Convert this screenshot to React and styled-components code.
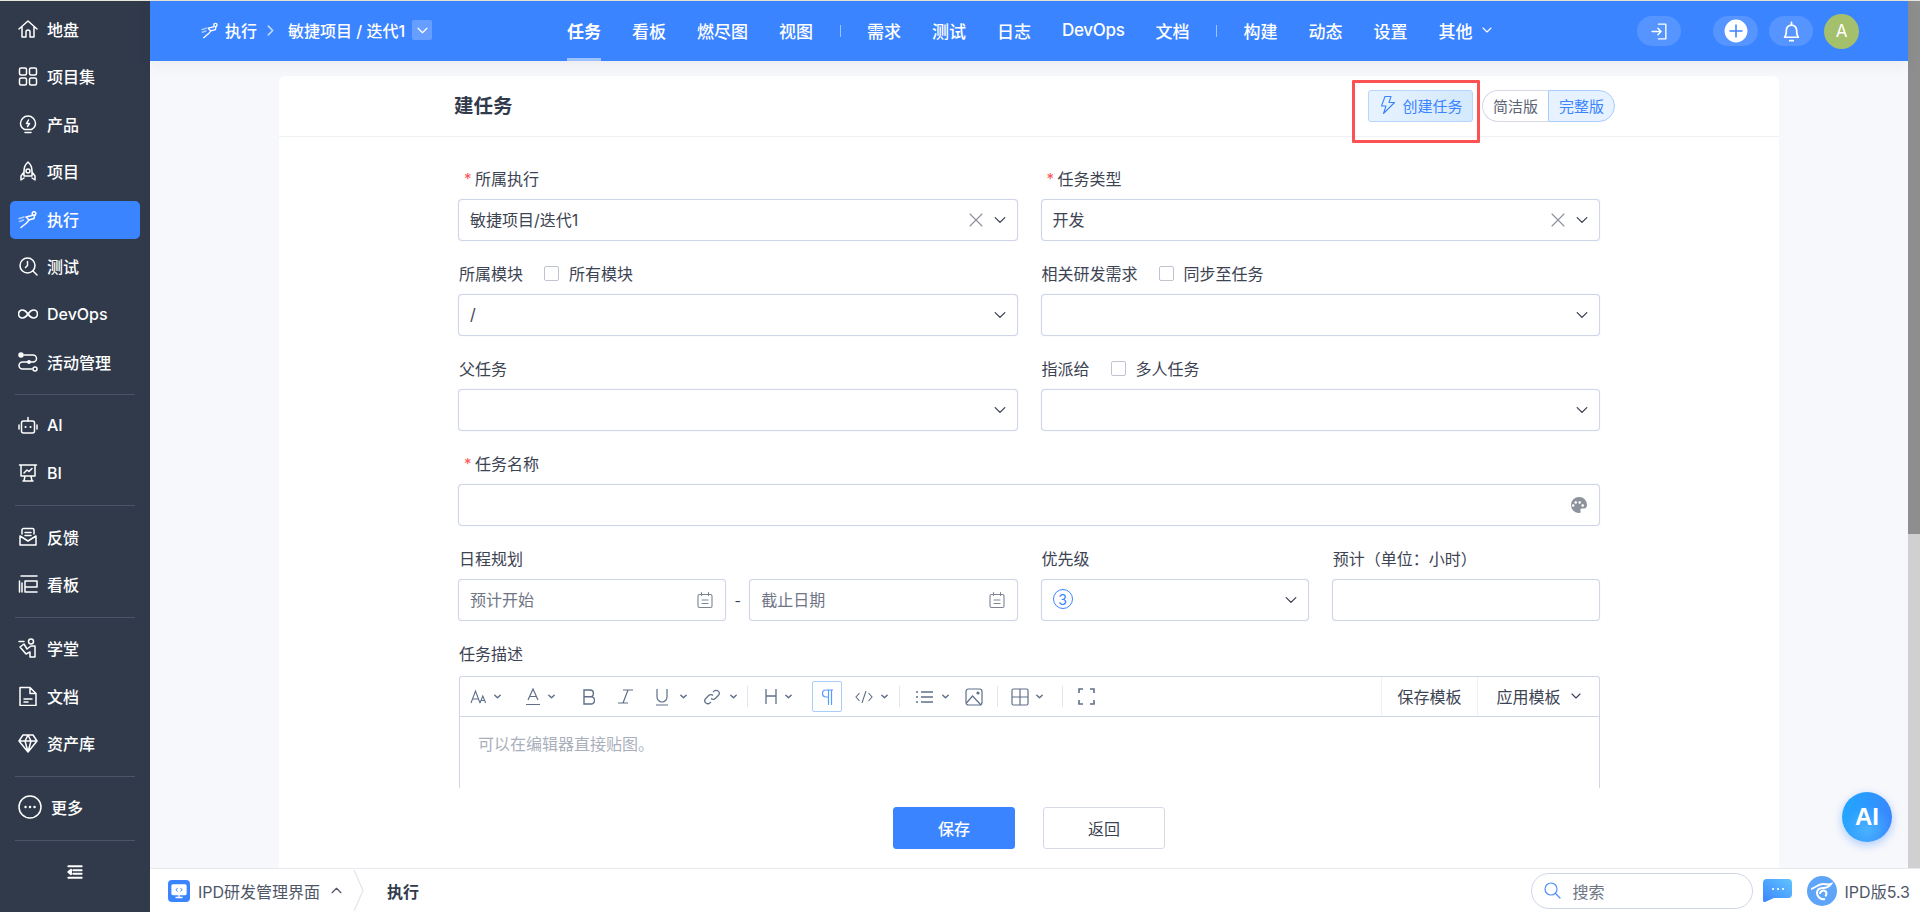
import React from 'react';
import styled, { createGlobalStyle } from 'styled-components';

const SANS = `Inter, 'Noto Sans CJK SC', 'Noto Sans', sans-serif`;

const Global = createGlobalStyle`
  html, body {
    margin: 0;
    padding: 0;
    height: 100%;
    overflow: hidden;
    font-family: ${SANS};
    color: #3c4353;
  }
  * { box-sizing: border-box; }
  #root { height: 100%; }
`;

const Shell = styled.div`
  width: 1920px;
  height: 912px;
  display: flex;
  flex-direction: column;
  position: relative;
  overflow: hidden;
  background: #f7f8fb;
`;
const TopStrip = styled.div`
  height: 1px;
  flex: none;
  background: #e9e6da;
`;
const Frame = styled.div`
  flex: 1;
  min-height: 0;
  display: flex;
`;
const Workspace = styled.div`
  flex: 1;
  min-width: 0;
  display: flex;
  flex-direction: column;
`;
const Body = styled.div`
  flex: 1;
  min-height: 0;
  display: flex;
`;

/* sidebar */
const Sidebar = styled.aside`
  width: 150px;
  flex: none;
  background: #303a4b;
  padding: 9.5px 10px 0;
  display: flex;
  flex-direction: column;
  color: #fff;
`;
const NavGroup = styled.div`
  flex: none;
  display: flex;
  flex-direction: column;
  gap: 9.6px;
`;
const NavItem = styled.div`
  height: 38px;
  flex: none;
  display: flex;
  align-items: center;
  gap: 9px;
  padding: 0 0 2px 8px;
  border-radius: 5px;
  font-size: 16px;
  font-weight: 500;
  background: ${p => (p.$active ? '#3b84ff' : 'transparent')};
  svg { flex: none; }
`;
const NavRule = styled.div`
  height: 1px;
  flex: none;
  margin: 12.3px 5px 12.5px;
  background: #4b5567;
`;
const Collapse = styled.div`
  display: flex;
  justify-content: center;
  padding-top: 11px;
`;

/* main area */
const Main = styled.div`
  flex: 1;
  min-width: 0;
  display: flex;
  flex-direction: column;
`;
const Header = styled.header`
  height: 60px;
  flex: none;
  background: #3b84ff;
  color: #fff;
  display: flex;
  align-items: center;
  box-shadow: 0 4px 14px rgba(40, 60, 100, 0.07);
  position: relative;
  z-index: 2;
`;
const Crumb = styled.div`
  width: 417px;
  flex: none;
  display: flex;
  align-items: center;
  padding: 0 0 2px 51px;
  font-size: 16px;
  font-weight: 500;
`;
const CrumbText = styled.span`
  margin-left: 6px;
`;
const CrumbSep = styled.span`
  display: inline-flex;
  margin: 0 12px 0 8px;
`;
const CrumbBox = styled.span`
  width: 20px;
  height: 20px;
  margin-left: 7px;
  border-radius: 2px;
  background: rgba(255, 255, 255, 0.22);
  display: flex;
  align-items: center;
  justify-content: center;
`;
const Tabs = styled.nav`
  flex: 1;
  height: 100%;
  display: flex;
  align-items: center;
  gap: 31px;
`;
const Tab = styled.div`
  height: 100%;
  display: flex;
  align-items: center;
  padding-bottom: 2px;
  font-size: 17px;
  font-weight: ${p => (p.$active ? 700 : 500)};
  position: relative;
  gap: 9px;
  letter-spacing: ${p => (p.$latin ? '-0.3px' : 0)};
  ${p => p.$active && `
    &::after {
      content: '';
      position: absolute;
      left: 0;
      right: 0;
      bottom: 0;
      height: 3px;
      background: #9cc2ff;
    }
  `}
`;
const TabRule = styled.span`
  width: 1px;
  height: 12px;
  margin: 0 -4.5px;
  background: rgba(255, 255, 255, 0.5);
`;
const HeadRight = styled.div`
  display: flex;
  align-items: center;
  margin-right: 49px;
`;
const RoundBtn = styled.div`
  width: ${p => p.$w}px;
  height: 30px;
  border-radius: 15px;
  margin-left: ${p => p.$ml || 0}px;
  background: rgba(255, 255, 255, 0.14);
  display: flex;
  align-items: center;
  justify-content: center;
`;
const Avatar = styled.div`
  width: 35px;
  height: 35px;
  margin-left: 11px;
  border-radius: 50%;
  background: #a5c06c;
  display: flex;
  align-items: center;
  justify-content: center;
  font-size: 17px;
`;
const Content = styled.div`
  flex: 1;
  min-height: 0;
  padding: 15px 129px 0;
  display: flex;
`;
const Card = styled.section`
  flex: 1;
  min-width: 0;
  display: flex;
  flex-direction: column;
  background: #fff;
  border-radius: 6px 6px 0 0;
`;
const CardHead = styled.div`
  height: 61px;
  flex: none;
  border-bottom: 1px solid #eff1f5;
  padding: 0 164px 0 176px;
  display: flex;
  align-items: center;
  justify-content: space-between;
  position: relative;
`;
const Title = styled.h1`
  margin: -3px 0 0 -1px;
  font-size: 19.5px;
  font-weight: 700;
  color: #303a4b;
`;
const HeadActions = styled.div`
  display: flex;
  align-items: center;
  gap: 9px;
`;
const QuickBtn = styled.div`
  width: 105px;
  height: 32px;
  padding-bottom: 2px;
  border: 1px solid #b8d5fa;
  border-radius: 3px;
  background: linear-gradient(90deg, #e8f3ff, #d3e9fd);
  color: #3b84ff;
  font-size: 15px;
  display: flex;
  align-items: center;
  justify-content: center;
  gap: 4px;
`;
const Switch = styled.div`
  width: 133px;
  height: 32px;
  display: flex;
  font-size: 15px;
`;
const SwitchPart = styled.div`
  flex: 1;
  padding-bottom: 2px;
  display: flex;
  align-items: center;
  justify-content: center;
  border: 1px solid ${p => (p.$on ? '#a9ccfb' : '#d6d9e6')};
  border-right-width: ${p => (p.$on ? 1 : 0)}px;
  border-radius: ${p => (p.$on ? '0 16px 16px 0' : '16px 0 0 16px')};
  background: ${p => (p.$on ? '#e6f2ff' : '#fff')};
  color: ${p => (p.$on ? '#3b84ff' : '#5c6474')};
`;
const RedMark = styled.div`
  position: absolute;
  left: 1073px;
  top: 4px;
  width: 128px;
  height: 63px;
  border: 3px solid #fb5354;
  border-radius: 1px;
`;

const FormScroll = styled.div`
  flex: 1;
  min-height: 0;
  overflow: hidden;
  padding: 32px 0 0 179px;
`;
const Form = styled.div`
  width: 1142px;
  display: grid;
  grid-template-columns: repeat(4, 1fr);
  column-gap: 23px;
  row-gap: 23px;
`;
const Field = styled.div`
  grid-column: span ${p => p.$span || 1};
  min-width: 0;
`;
const Label = styled.div`
  height: 20px;
  margin-bottom: ${p => p.$gap || 10}px;
  padding: 0 0 2px ${p => (p.$req ? 6 : 1)}px;
  display: flex;
  align-items: center;
  font-size: 16px;
  color: #3c4353;
  white-space: nowrap;
`;
const Star = styled.span`
  color: #fb5354;
  width: 11px;
  font-size: 15px;
`;
const Check = styled.span`
  width: 15px;
  height: 15px;
  margin: 0 10px 0 21px;
  border: 1px solid #bfc4d0;
  border-radius: 2px;
  background: #fff;
`;
const Control = styled.div`
  height: 42px;
  border: 1px solid #d0d6e8;
  border-radius: 4px;
  background: #fff;
  padding: 0 11px;
  display: flex;
  align-items: center;
  font-size: 16px;
  color: #3c4353;
  box-shadow: 0 0 1px rgba(190, 198, 225, 0.7);
`;
const Value = styled.span`
  flex: 1;
  min-width: 0;
  padding-bottom: 2px;
  white-space: nowrap;
  color: ${p => (p.$muted ? '#6e7585' : 'inherit')};
`;
const ClearIcon = styled.span`
  display: flex;
  margin-right: 11px;
`;
const DateRange = styled.div`
  position: relative;
`;
const Dash = styled.span`
  position: absolute;
  left: 100%;
  top: 0;
  width: 23px;
  height: 42px;
  display: flex;
  align-items: center;
  justify-content: center;
  font-size: 14px;
`;
const PriorityBadge = styled.span`
  width: 20px;
  height: 20px;
  border: 1px solid #3b84ff;
  border-radius: 50%;
  color: #3b84ff;
  font-size: 14px;
  display: flex;
  align-items: center;
  justify-content: center;
`;

const Editor = styled.div`
  margin-left: 1px;
  border: 1px solid #d0d6e8;
  border-bottom: none;
  border-radius: 3px 3px 0 0;
  height: 200px;
`;
const Toolbar = styled.div`
  height: 40px;
  border-bottom: 1px solid #d0d6e8;
  display: flex;
  align-items: center;
  padding-left: 10px;
`;
const Tool = styled.span`
  flex: none;
  width: ${p => p.$w}px;
  height: ${p => (p.$box ? 31 : 20)}px;
  margin-left: ${p => p.$ml || 0}px;
  display: flex;
  align-items: center;
  justify-content: ${p => (p.$box ? 'center' : 'space-between')};
  border: ${p => (p.$box ? '1px solid #a9ccfb' : 'none')};
  border-radius: 2px;
`;
const ToolRule = styled.span`
  flex: none;
  width: 1px;
  height: 21px;
  margin: 0 ${p => p.$r}px 0 ${p => p.$l}px;
  background: #e3e6ee;
`;
const ToolSpring = styled.span`
  flex: 1;
`;
const ToolAction = styled.div`
  flex: none;
  width: ${p => p.$w}px;
  height: 100%;
  padding-bottom: 2px;
  border-left: 1px solid #eff1f5;
  display: flex;
  align-items: center;
  justify-content: center;
  gap: 10px;
  font-size: 16px;
  color: #3c4353;
`;
const Placeholder = styled.div`
  padding: 18px 18px;
  font-size: 16px;
  line-height: 18px;
  color: #aab0bb;
`;
const FormFoot = styled.div`
  height: 80px;
  flex: none;
  background: #fff;
  padding-left: 614px;
  display: flex;
  align-items: center;
  gap: 28px;
`;
const Btn = styled.div`
  width: 122px;
  height: 42px;
  border-radius: 3px;
  display: flex;
  align-items: center;
  justify-content: center;
  font-size: 16px;
  font-weight: ${p => (p.$primary ? 500 : 400)};
  background: ${p => (p.$primary ? '#3b84ff' : '#fff')};
  color: ${p => (p.$primary ? '#fff' : '#3c4353')};
  border: 1px solid ${p => (p.$primary ? '#3b84ff' : '#d6d9e6')};
`;

const ScrollTrack = styled.div`
  width: 12px;
  flex: none;
  background: #d0d0d0;
`;
const ScrollThumb = styled.div`
  height: 533px;
  background: #8e8e8e;
`;

/* bottom bar */
const BottomBar = styled.footer`
  height: 44px;
  flex: none;
  background: #fff;
  border-top: 1px solid #e8eaf0;
  display: flex;
  align-items: center;
  padding: 0 10px 0 18px;
`;
const AppBadge = styled.span`
  width: 22px;
  height: 22px;
  border-radius: 4px;
  background: #3b84ff;
  display: flex;
  align-items: center;
  justify-content: center;
`;
const AppName = styled.span`
  margin: 0 11px 0 8px;
  font-size: 16px;
  color: #4e5668;
`;
const CrumbArrow = styled.svg`
  margin-left: 11px;
`;
const CrumbLabel = styled.span`
  margin-left: 22px;
  font-size: 16px;
  font-weight: 700;
  color: #303a4b;
`;
const BarSpring = styled.span`
  flex: 1;
`;
const SearchBox = styled.div`
  width: 222px;
  height: 36px;
  margin-right: 2px;
  border: 1px solid #d0d6e8;
  border-radius: 18px;
  display: flex;
  align-items: center;
  gap: 12px;
  padding-left: 12px;
  font-size: 16px;
  color: #6e7585;
`;
const ChatIcon = styled.svg`
  margin-left: 8px;
`;
const BrandIcon = styled.svg`
  margin-left: 15px;
`;
const Version = styled.span`
  margin-left: 8px;
  font-size: 16px;
  color: #4e5668;
`;
const AiFab = styled.div`
  position: absolute;
  left: 1842px;
  top: 792px;
  width: 50px;
  height: 50px;
  border-radius: 50%;
  background: radial-gradient(circle at 50% 75%, #4ab2ff, transparent 55%), linear-gradient(100deg, #1fa8ff, #3b84ff);
  box-shadow: 0 3px 10px rgba(59, 132, 255, 0.4);
  color: #fff;
  font-family: 'Liberation Sans', sans-serif;
  font-weight: 700;
  font-size: 24px;
  display: flex;
  align-items: center;
  justify-content: center;
`;

/* icons */
const Ico = ({ size = 20, color = '#fff', sw = 1.5, children, vb = 20 }) => (
  <svg width={size} height={size} viewBox={`0 0 ${vb} ${vb}`} fill="none" stroke={color} strokeWidth={sw} strokeLinecap="round" strokeLinejoin="round">
    {children}
  </svg>
);
const Chevron = ({ size = 10, color = '#3c4353', dir = 'down', sw = 1.1 }) => {
  const d = { down: 'M1 3l4 4 4-4', up: 'M1 7l4-4 4 4', right: 'M3 1l4 4-4 4' }[dir];
  return <Ico size={size} vb={10} color={color} sw={sw}><path d={d} /></Ico>;
};
const Runner = ({ size = 20 }) => (
  <Ico size={size}>
    <circle cx="16" cy="4.5" r="1.8" />
    <path d="M14 6.5L8 8l3 3-2.5 3L3 18.5M11 11l5-1.5 .5-3" />
    <path d="M1 9.5l5-1.5M1.5 12.5l4-1.5" stroke="rgba(255,255,255,.6)" />
  </Ico>
);
const icons = {
  home: <Ico><path d="M1 10l9-8 9 8M4 8v10h4v-5a2 2 0 0 1 4 0v5h4V8" /></Ico>,
  grid: <Ico><rect x="1.5" y="2" width="7" height="7" rx="1.5" /><rect x="11.5" y="2" width="7" height="7" rx="1.5" /><rect x="1.5" y="12" width="7" height="7" rx="1.5" /><rect x="11.5" y="12" width="7" height="7" rx="1.5" /></Ico>,
  bulb: <Ico><path d="M6.5 15.5C4 14 2.5 12 2.5 9.5a7.5 7.5 0 0 1 15 0c0 2.5-1.5 4.5-4 6zM7 18.5h6" /><path d="M10.5 6l-2 3.5h3l-2 3" /></Ico>,
  rocket: <Ico><path d="M10 1c3 2.5 4 6 4 9v5H6v-5c0-3 1-6.5 4-9zM6 11l-3 4v4l3-2M14 11l3 4v4l-3-2" /><circle cx="10" cy="10" r="2" /></Ico>,
  search: <Ico><circle cx="9.5" cy="9.5" r="7.5" /><path d="M15 15l4 4M9.5 5.5v4l-2 2" /></Ico>,
  infinity: <Ico sw={1.7}><path d="M10 10c-2-3-3.5-4-5.5-4a4 4 0 0 0 0 8c2 0 3.5-1 5.5-4zm0 0c2-3 3.5-4 5.5-4a4 4 0 0 1 0 8c-2 0-3.5-1-5.5-4z" /></Ico>,
  flow: <Ico><circle cx="3" cy="3" r="2" fill="#fff" /><path d="M6 3h9a3.5 3.5 0 0 1 0 7H4.5a3.5 3.5 0 0 0 0 7H14" /><circle cx="17" cy="17" r="2" /><circle cx="11" cy="10" r="1.2" fill="#fff" /></Ico>,
  robot: <Ico><rect x="3.5" y="6" width="13" height="12" rx="2" /><path d="M10 6V2.5M1 10v4M19 10v4" /><path d="M7.5 12h.1M12.5 12h.1" strokeWidth="2" /></Ico>,
  board: <Ico><path d="M1.5 2h17M3 2v11h14V2M6 18l1-5M14 18l-1-5M5 18h10" /><path d="M6 10l3-3 2 1.5L14 5.5" /></Ico>,
  mail: <Ico><path d="M2 9v9h16V9M4 7V3a1.5 1.5 0 0 1 1.5-1.5h9A1.5 1.5 0 0 1 16 3v4M2 9l8 5 8-5M7 5.5h6M7 8.5h6" /></Ico>,
  kanban: <Ico><path d="M3 2h16M7 7h12v6H7zM1.5 7v11M4 9v9M7 13v5h12" /></Ico>,
  school: <Ico><circle cx="13" cy="3.5" r="2.5" /><path d="M1 3.5h5M2 9l4-3 3 5 4-3h4v11h-5v-5L8 16 2 9z" /></Ico>,
  doc: <Ico><path d="M2 1.5h10l6 6v12H2zM12 1.5v6h6M6 13h8M6 16h4" /></Ico>,
  gem: <Ico><path d="M5 2h10l4 6-9 11L1 8zM1 8h18M7 8l3 11 3-11M7 8l3-6 3 6" /></Ico>,
  more: <Ico size={24} vb={24}><circle cx="12" cy="12" r="11" /><path d="M7.5 12h.1M12 12h.1M16.5 12h.1" strokeWidth="2.4" /></Ico>,
};

const navGroups = [
  [['home', '地盘'], ['grid', '项目集'], ['bulb', '产品'], ['rocket', '项目'], ['run', '执行', true], ['search', '测试'], ['infinity', 'DevOps'], ['flow', '活动管理']],
  [['robot', 'AI'], ['board', 'BI']],
  [['mail', '反馈'], ['kanban', '看板']],
  [['school', '学堂'], ['doc', '文档'], ['gem', '资产库']],
  [['more', '更多']],
];
const leftTabs = ['看板', '燃尽图', '视图'];
const midTabs = ['需求', '测试', '日志', 'DevOps', '文档'];
const lastTabs = ['构建', '动态', '设置'];

const DateIcon = () => (
  <Ico size={18} vb={18} color="#7d8594" sw={1.1}>
    <rect x="2" y="3.5" width="14" height="13" rx="1.5" />
    <path d="M5.5 1.5v3M12.5 1.5v3M6 9h6M6 12.5h6" />
  </Ico>
);
const Select = ({ value, clear }) => (
  <Control>
    <Value>{value}</Value>
    {clear && (
      <ClearIcon>
        <Ico size={14} vb={14} color="#8a909c" sw={1.1}><path d="M1 1l12 12M13 1L1 13" /></Ico>
      </ClearIcon>
    )}
    <Chevron size={12} />
  </Control>
);

const tc = '#5f6f88';
const mini = <Ico size={9} vb={10} color={tc} sw={1.6}><path d="M2 3.5l3 3 3-3" /></Ico>;

const App = () => (
  <Shell>
    <Global />
    <TopStrip />
    <Frame>
      <Sidebar>
        {navGroups.map((group, i) => (
          <React.Fragment key={i}>
            {i > 0 && <NavRule />}
            <NavGroup>
              {group.map(([icon, label, active]) => (
                <NavItem key={label} $active={active}>
                  {icon === 'run' ? <Runner /> : icons[icon]}
                  {label}
                </NavItem>
              ))}
            </NavGroup>
          </React.Fragment>
        ))}
        <NavRule />
        <Collapse>
          <Ico size={16} vb={18} sw={2.2}>
            <path d="M1.5 2.5h15M7 7h9.5M7 11h9.5M1.5 15.5h15" />
            <path d="M4.5 6.5L1.5 9l3 2.5z" fill="#fff" />
          </Ico>
        </Collapse>
      </Sidebar>
      <Workspace>
        <Body>
          <Main>
            <Header>
              <Crumb>
                <Runner size={18} />
                <CrumbText>执行</CrumbText>
                <CrumbSep><Chevron size={11} color="rgba(255,255,255,.7)" dir="right" sw={1.4} /></CrumbSep>
                敏捷项目 / 迭代1
                <CrumbBox><Chevron size={11} color="#fff" /></CrumbBox>
              </Crumb>
              <Tabs>
                <Tab $active>任务</Tab>
                {leftTabs.map(t => <Tab key={t}>{t}</Tab>)}
                <TabRule />
                {midTabs.map(t => <Tab key={t} $latin={t === 'DevOps'}>{t}</Tab>)}
                <TabRule />
                {lastTabs.map(t => <Tab key={t}>{t}</Tab>)}
                <Tab>其他<Chevron size={10} color="#fff" /></Tab>
              </Tabs>
              <HeadRight>
                <RoundBtn $w={44}>
                  <Ico size={19} vb={18} sw={1.3}><path d="M8 2h7v14H8M2 9h8M7.5 6l3 3-3 3" /></Ico>
                </RoundBtn>
                <RoundBtn $w={45} $ml={32}>
                  <svg width="24" height="24" viewBox="0 0 22 22"><circle cx="11" cy="11" r="10.5" fill="#fff" /><path d="M11 5v12M5 11h12" stroke="#3b84ff" strokeWidth="1.4" /></svg>
                </RoundBtn>
                <RoundBtn $w={44} $ml={11}>
                  <Ico size={23} sw={1.5}><path d="M4 15c1.5-1.5 1.5-3 1.5-6a4.5 4.5 0 0 1 9 0c0 3 0 4.5 1.5 6zM8.5 18h3M10 2v2" /></Ico>
                </RoundBtn>
                <Avatar>A</Avatar>
              </HeadRight>
            </Header>
            <Content>
              <Card>
                <CardHead>
                  <Title>建任务</Title>
                  <HeadActions>
                    <QuickBtn>
                      <Ico size={20} color="#3b84ff" sw={1.1}><path d="M13 1.5H7L3.5 11H8L5.5 18.5 16.5 7.5H11z" /></Ico>
                      创建任务
                    </QuickBtn>
                    <Switch>
                      <SwitchPart>简洁版</SwitchPart>
                      <SwitchPart $on>完整版</SwitchPart>
                    </Switch>
                  </HeadActions>
                  <RedMark />
                </CardHead>
                <FormScroll>
                  <Form>
                    <Field $span={2}>
                      <Label $req><Star>*</Star>所属执行</Label>
                      <Select value="敏捷项目/迭代1" clear />
                    </Field>
                    <Field $span={2}>
                      <Label $req><Star>*</Star>任务类型</Label>
                      <Select value="开发" clear />
                    </Field>
                    <Field $span={2}>
                      <Label>所属模块<Check />所有模块</Label>
                      <Select value="/" />
                    </Field>
                    <Field $span={2}>
                      <Label>相关研发需求<Check />同步至任务</Label>
                      <Select />
                    </Field>
                    <Field $span={2}>
                      <Label>父任务</Label>
                      <Select />
                    </Field>
                    <Field $span={2}>
                      <Label>指派给<Check />多人任务</Label>
                      <Select />
                    </Field>
                    <Field $span={4}>
                      <Label $req><Star>*</Star>任务名称</Label>
                      <Control>
                        <Value />
                        <svg width="18" height="18" viewBox="0 0 18 18">
                          <path fill="#8d929c" fillRule="evenodd" d="M9 1a8 8 0 0 0 0 16c1.5 0 2-1 1.5-2-.6-1.3.3-2.5 1.7-2.5H14c1.8 0 3-1.3 3-3.5 0-4.5-3.5-8-8-8zM4.5 9.5a1.3 1.3 0 1 1 0-.1zm2.5-3a1.3 1.3 0 1 1 0-.1zm4 0a1.3 1.3 0 1 1 0-.1zm3 3a1.3 1.3 0 1 1 0-.1z" />
                        </svg>
                      </Control>
                    </Field>
                    <Field>
                      <Label>日程规划</Label>
                      <DateRange>
                        <Control><Value $muted>预计开始</Value><DateIcon /></Control>
                        <Dash>-</Dash>
                      </DateRange>
                    </Field>
                    <Field>
                      <Label>&nbsp;</Label>
                      <Control><Value $muted>截止日期</Value><DateIcon /></Control>
                    </Field>
                    <Field>
                      <Label>优先级</Label>
                      <Control>
                        <Value><PriorityBadge>3</PriorityBadge></Value>
                        <Chevron size={12} />
                      </Control>
                    </Field>
                    <Field>
                      <Label>预计（单位：小时）</Label>
                      <Control />
                    </Field>
                    <Field $span={4}>
                      <Label $gap={12}>任务描述</Label>
                      <Editor>
                        <Toolbar>
                          <Tool $w={32}>
                            <svg width="17" height="16" viewBox="0 0 17 16" fill="none" stroke={tc} strokeWidth="1.1"><path d="M1 14L5.5 2 10 14M2.5 10h6M10 14l2.8-7 2.8 7M11 11.5h3.5" /></svg>
                            {mini}
                          </Tool>
                          <Tool $w={31} $ml={23}>
                            <svg width="16" height="18" viewBox="0 0 16 18" fill="none" stroke={tc} strokeWidth="1.2"><path d="M3 12L8 1l5 11M4.5 8.5h7M1 16.5h14" /></svg>
                            {mini}
                          </Tool>
                          <Tool $w={12} $ml={27}>
                            <svg width="12" height="16" viewBox="0 0 12 16" fill="none" stroke={tc} strokeWidth="1.4"><path d="M1 1h6a3.3 3.3 0 0 1 0 6.8H1zM1 7.8h7a3.6 3.6 0 0 1 0 7.2H1z" /></svg>
                          </Tool>
                          <Tool $w={15} $ml={23}>
                            <svg width="15" height="15" viewBox="0 0 15 15" fill="none" stroke={tc} strokeWidth="1.2"><path d="M5 1h10M0 14h10M10 1L5 14" /></svg>
                          </Tool>
                          <Tool $w={32} $ml={23}>
                            <svg width="12" height="18" viewBox="0 0 12 18" fill="none" stroke={tc} strokeWidth="1.2"><path d="M1 1v8a5 5 0 0 0 10 0V1M0 17h12" /></svg>
                            {mini}
                          </Tool>
                          <Tool $w={34} $ml={16}>
                            <svg width="16" height="16" viewBox="0 0 16 16" fill="none" stroke={tc} strokeWidth="1.2"><path d="M7 9.5a3 3 0 0 0 4.3 0l3-3a3 3 0 0 0-4.3-4.3l-1 1M9 6.5a3 3 0 0 0-4.3 0l-3 3a3 3 0 0 0 4.3 4.3l1-1" /></svg>
                            {mini}
                          </Tool>
                          <ToolRule $l={9} $r={17} />
                          <Tool $w={28}>
                            <svg width="12" height="15" viewBox="0 0 12 15" fill="none" stroke={tc} strokeWidth="1.3"><path d="M1 0v15M11 0v15M1 7h10" /></svg>
                            {mini}
                          </Tool>
                          <Tool $w={30} $box $ml={19}>
                            <svg width="13" height="16" viewBox="0 0 13 16" fill="none" stroke="#5a9bff" strokeWidth="1.2"><path d="M12 1H5a3.5 3.5 0 0 0 0 7h2.5M7.5 1v15M10.5 1v15" /></svg>
                          </Tool>
                          <Tool $w={34} $ml={13}>
                            <svg width="18" height="12" viewBox="0 0 18 12" fill="none" stroke={tc} strokeWidth="1.1"><path d="M4.5 2L1 6l3.5 4M13.5 2L17 6l-3.5 4M11 0L7 12" /></svg>
                            {mini}
                          </Tool>
                          <ToolRule $l={10} $r={16} />
                          <Tool $w={34}>
                            <svg width="17" height="14" viewBox="0 0 17 14" fill="none" stroke={tc} strokeWidth="1.6"><path d="M5 2h12M5 7h12M5 12h12M0 2h2M0 7h2M0 12h2" /></svg>
                            {mini}
                          </Tool>
                          <Tool $w={18} $ml={15}>
                            <svg width="18" height="18" viewBox="0 0 18 18" fill="none" stroke={tc} strokeWidth="1.2"><rect x="1" y="1" width="16" height="16" rx="2.5" /><path d="M1.5 15l6-7 8.5 9" /><circle cx="13" cy="5" r="1" fill={tc} /></svg>
                          </Tool>
                          <ToolRule $l={14} $r={13} />
                          <Tool $w={33}>
                            <svg width="18" height="18" viewBox="0 0 18 18" fill="none" stroke={tc} strokeWidth="1.2"><rect x="1" y="1" width="16" height="16" rx="1.5" /><path d="M1 9h16M9 1v16" /></svg>
                            {mini}
                          </Tool>
                          <ToolRule $l={18} $r={15} />
                          <Tool $w={17}>
                            <svg width="17" height="17" viewBox="0 0 17 17" fill="none" stroke={tc} strokeWidth="1.6"><path d="M1 5V1h4M12 1h4v4M16 12v4h-4M5 16H1v-4" /></svg>
                          </Tool>
                          <ToolSpring />
                          <ToolAction $w={96}>保存模板</ToolAction>
                          <ToolAction $w={122}>应用模板<Chevron size={10} /></ToolAction>
                        </Toolbar>
                        <Placeholder>可以在编辑器直接贴图。</Placeholder>
                      </Editor>
                    </Field>
                  </Form>
                </FormScroll>
                <FormFoot>
                  <Btn $primary>保存</Btn>
                  <Btn>返回</Btn>
                </FormFoot>
              </Card>
            </Content>
          </Main>
          <ScrollTrack><ScrollThumb /></ScrollTrack>
        </Body>
        <BottomBar>
          <AppBadge>
            <svg width="16" height="16" viewBox="0 0 16 16" fill="none" stroke="#fff" strokeWidth="1.3"><rect x="1" y="2" width="14" height="9.5" rx="1" fill="#fff" /><path d="M8 11.5V14M4.5 14.5h7" /><path d="M6.5 5L5 6.8l1.5 1.7M9.5 5L11 6.8 9.5 8.5" stroke="#3b84ff" strokeWidth="1" /></svg>
          </AppBadge>
          <AppName>IPD研发管理界面</AppName>
          <Chevron size={11} dir="up" color="#4e5668" />
          <CrumbArrow width="12" height="43" viewBox="0 0 12 44" fill="none" stroke="#e2e4ea" strokeWidth="1.2"><path d="M1 1l9 21-9 21" /></CrumbArrow>
          <CrumbLabel>执行</CrumbLabel>
          <BarSpring />
          <SearchBox>
            <Ico size={17} vb={17} color="#4f8fff" sw={1.2}><circle cx="7" cy="7" r="6" /><path d="M11.5 11.5L16 16" /></Ico>
            搜索
          </SearchBox>
          <ChatIcon width="29" height="23" viewBox="0 0 29 23">
            <defs><linearGradient id="chatFill" x1="0" y1="1" x2="1" y2="0"><stop offset="0" stopColor="#3b84ff" /><stop offset="1" stopColor="#5fc4ff" /></linearGradient></defs>
            <path fill="url(#chatFill)" d="M4 0h21a4 4 0 0 1 4 4v11a4 4 0 0 1-4 4H11L2 23c-1 .3-2-.2-2-1.5V4a4 4 0 0 1 4-4z" />
            <path d="M10 10h.1M15 10h.1M20 10h.1" stroke="#fff" strokeWidth="2" strokeLinecap="round" />
          </ChatIcon>
          <BrandIcon width="30" height="30" viewBox="0 0 30 30" fill="none">
            <circle cx="15" cy="15" r="15" fill="#5ea5f9" />
            <path d="M4 13c4-1 7-5 12-5 3 0 5 1 8 0-2 3-5 4-8 4-4 0-6 2-6 5 0 4 4 7 8 6" stroke="#fff" strokeWidth="2" />
            <path d="M13 18c0-3 3-4 5-3s2 4 0 5" stroke="#fff" strokeWidth="2" />
          </BrandIcon>
          <Version>IPD版5.3</Version>
        </BottomBar>
      </Workspace>
    </Frame>
    <AiFab>AI</AiFab>
  </Shell>
);

export default App;
